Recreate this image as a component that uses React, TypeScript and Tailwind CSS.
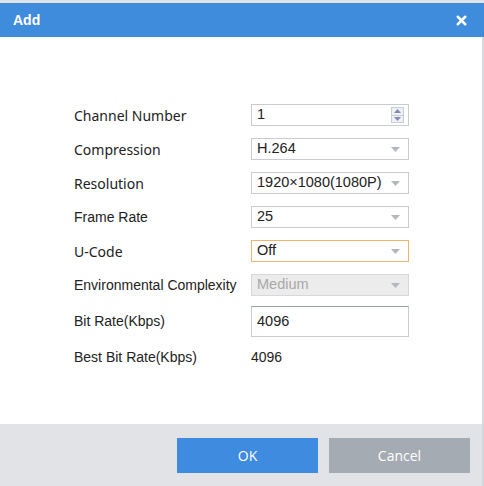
import { X } from "lucide-react";

const Caret = () => (
  <svg width="9" height="5" viewBox="0 0 9 5" className="shrink-0">
    <path d="M0 0h9L4.5 5z" fill="#b4b8be" />
  </svg>
);

const Spinner = () => (
  <div className="flex h-[16px] w-[13px] flex-col border border-[#c9ced6] bg-[#eef0f4]">
    <div className="flex flex-1 items-center justify-center border-b border-[#c9ced6]">
      <svg width="7" height="4" viewBox="0 0 7 4">
        <path d="M3.5 0L7 4H0z" fill="#7e8cb0" />
      </svg>
    </div>
    <div className="flex flex-1 items-center justify-center">
      <svg width="7" height="4" viewBox="0 0 7 4">
        <path d="M0 0h7L3.5 4z" fill="#7e8cb0" />
      </svg>
    </div>
  </div>
);

interface RowProps {
  label: string;
  label2?: boolean;
  children: React.ReactNode;
}

const Row = ({ label, label2, children }: RowProps) => (
  <div className="flex h-[34px] items-center">
    <span
      className={`w-[177px] shrink-0 text-[#222] ${
        label2
          ? "font-['Liberation_Sans',sans-serif] text-[14px]"
          : "font-['Noto_Sans',sans-serif] text-[14px]"
      }`}
    >
      {label}
    </span>
    {children}
  </div>
);

const Select = ({
  value,
  tone = "normal",
}: {
  value: string;
  tone?: "normal" | "focus" | "disabled";
}) => {
  const box =
    tone === "focus"
      ? "border-[#f0b46a] bg-white text-[#222]"
      : tone === "disabled"
        ? "border-[#d6d8dc] bg-[#ececec] text-[#a8a8a8]"
        : "border-[#c8ccd2] bg-white text-[#222]";
  return (
    <div
      className={`flex h-[22px] w-[158px] items-center justify-between border pl-[5px] pr-[8px] text-[14.5px] ${box}`}
    >
      <span>{value}</span>
      <Caret />
    </div>
  );
};

export default function App() {
  return (
    <div className="flex h-[486px] w-[484px] flex-col overflow-hidden bg-[#dfe2e6] pt-[3px] font-['Liberation_Sans',sans-serif]">
      <div className="flex h-[34px] items-center justify-between bg-[#3f8bdc] pl-[13px] pr-[15px]">
        <span className="text-[14px] font-bold text-white">Add</span>
        <X size={15} strokeWidth={4} className="text-white" />
      </div>

      <div className="flex flex-1 flex-col border-r-2 border-[#d4d7dc] bg-white pl-[74px] pt-[61px]">
        <Row label="Channel Number">
          <div className="flex h-[22px] w-[158px] items-center justify-between border border-[#c8ccd2] pl-[5px] pr-[4px] text-[14.5px] text-[#222]">
            <span>1</span>
            <Spinner />
          </div>
        </Row>
        <Row label="Compression">
          <Select value="H.264" />
        </Row>
        <Row label="Resolution">
          <Select value="1920×1080(1080P)" />
        </Row>
        <Row label="Frame Rate" label2>
          <Select value="25" />
        </Row>
        <Row label="U-Code">
          <Select value="Off" tone="focus" />
        </Row>
        <Row label="Environmental Complexity" label2>
          <Select value="Medium" tone="disabled" />
        </Row>
        <div className="flex h-[39px] items-center">
          <span className="w-[177px] shrink-0 text-[14px] text-[#222]">
            Bit Rate(Kbps)
          </span>
          <div className="flex h-[31px] w-[158px] items-center border border-[#c8ccd2] border-t-[#9aa0a8] pl-[5px] text-[14.5px] text-[#222]">
            4096
          </div>
        </div>
        <div className="flex h-[32px] items-center">
          <span className="w-[177px] shrink-0 text-[14px] text-[#222]">
            Best Bit Rate(Kbps)
          </span>
          <span className="text-[14px] text-[#222]">4096</span>
        </div>
      </div>

      <div className="flex h-[62px] items-center justify-end gap-[11px] border-r-2 border-[#d4d7dc] bg-[#e1e3e6] pr-[12px]">
        <button className="h-[35px] w-[141px] bg-[#3f8be0] font-['Open_Sans',sans-serif] text-[14px] text-white">
          OK
        </button>
        <button className="h-[35px] w-[141px] bg-[#a5abb3] font-['Open_Sans',sans-serif] text-[14px] text-white">
          Cancel
        </button>
      </div>
    </div>
  );
}
